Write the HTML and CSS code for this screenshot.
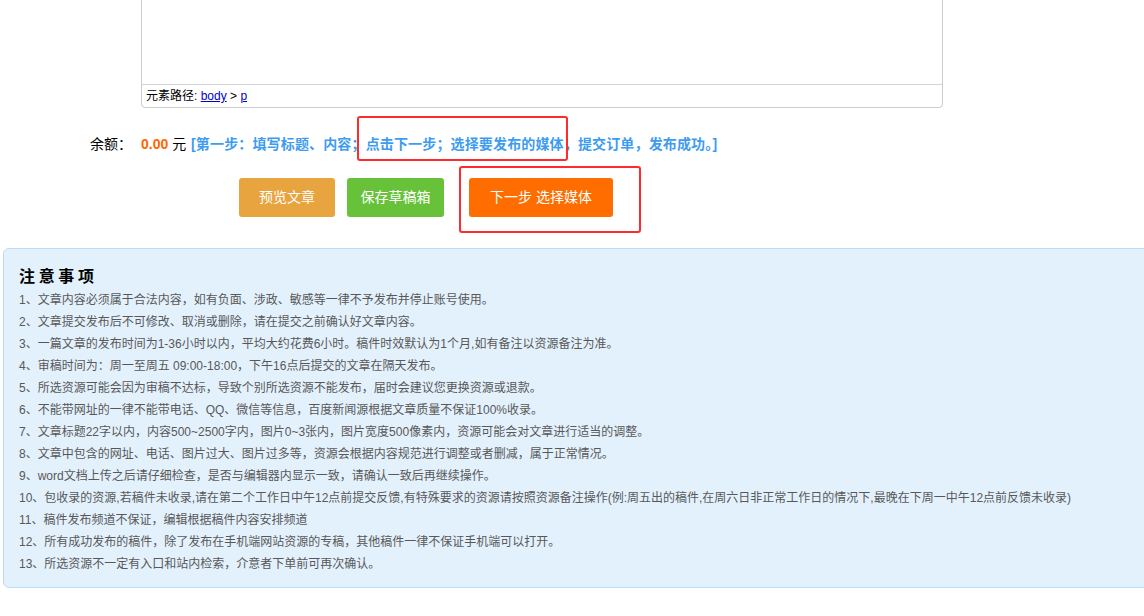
FILE: index.html
```html
<!DOCTYPE html>
<html>
<head>
	<meta charset="UTF-8">
	<title>发布文章</title>
	<link rel="stylesheet" href="styles.css">
</head>
<body>
	<div class="page">
		<!-- 编辑器 -->
		<div class="editor">
			<div class="editor_body"></div>
			<div class="editor_path">元素路径: <a href="#">body</a> &gt; <a href="#">p</a></div>
		</div>

		<div class="balance">
			<span class="balance_label">余额：</span><span class="money">0.00</span> 元
			<span class="steps">[第一步：填写标题、内容；点击下一步；选择要发布的媒体，提交订单，发布成功。]</span>
		</div>

		<div class="btns">
			<a class="btn btn_preview" href="#">预览文章</a>
			<a class="btn btn_save" href="#">保存草稿箱</a>
			<a class="btn btn_next" href="#">下一步 选择媒体</a>
		</div>

		<!-- 注意事项 -->
		<div class="notice">
			<h3>注 意 事 项</h3>
			<ul>
				<li>1、文章内容必须属于合法内容，如有负面、涉政、敏感等一律不予发布并停止账号使用。</li>
				<li>2、文章提交发布后不可修改、取消或删除，请在提交之前确认好文章内容。</li>
				<li>3、一篇文章的发布时间为1-36小时以内，平均大约花费6小时。稿件时效默认为1个月,如有备注以资源备注为准。</li>
				<li>4、审稿时间为：周一至周五 09:00-18:00，下午16点后提交的文章在隔天发布。</li>
				<li>5、所选资源可能会因为审稿不达标，导致个别所选资源不能发布，届时会建议您更换资源或退款。</li>
				<li>6、不能带网址的一律不能带电话、QQ、微信等信息，百度新闻源根据文章质量不保证100%收录。</li>
				<li>7、文章标题22字以内，内容500~2500字内，图片0~3张内，图片宽度500像素内，资源可能会对文章进行适当的调整。</li>
				<li>8、文章中包含的网址、电话、图片过大、图片过多等，资源会根据内容规范进行调整或者删减，属于正常情况。</li>
				<li>9、word文档上传之后请仔细检查，是否与编辑器内显示一致，请确认一致后再继续操作。</li>
				<li>10、包收录的资源,若稿件未收录,请在第二个工作日中午12点前提交反馈,有特殊要求的资源请按照资源备注操作(例:周五出的稿件,在周六日非正常工作日的情况下,最晚在下周一中午12点前反馈未收录)</li>
				<li>11、稿件发布频道不保证，编辑根据稿件内容安排频道</li>
				<li>12、所有成功发布的稿件，除了发布在手机端网站资源的专稿，其他稿件一律不保证手机端可以打开。</li>
				<li>13、所选资源不一定有入口和站内检索，介意者下单前可再次确认。</li>
			</ul>
		</div>

		<!-- 标注框 -->
		<div class="mark mark_step"></div>
		<div class="mark mark_btn"></div>
	</div>
</body>
</html>
```

FILE: styles.css
```css
* {
	padding: 0;
	margin: 0;
	box-sizing: border-box;
}

html,
body {
	overflow: hidden;
	background: #fff;
}

body {
	font-family: "Microsoft YaHei", "Liberation Sans", "Noto Sans CJK SC", sans-serif;
	font-size: 12px;
	color: #000;
}

li {
	list-style: none;
}

a {
	text-decoration: none;
}

.page {
	position: relative;
	width: 1160px;
}

/* 编辑器 */
.editor {
	width: 802px;
	margin: -1px 0 0 141px;
	border: 1px solid #ccc;
	border-radius: 0 0 4px 4px;
	background: #fff;
}

.editor_body {
	height: 85px;
	border-bottom: 1px solid #d4d4d4;
}

.editor_path {
	height: 22px;
	line-height: 22px;
	padding-left: 4px;
	font-size: 12px;
}

.editor_path a {
	color: #00c;
	text-decoration: underline;
}

/* 余额 */
.balance {
	margin-top: 25px;
	padding-left: 90px;
	height: 22px;
	line-height: 22px;
	font-size: 14px;
	white-space: nowrap;
}

.balance_label {
	display: inline-block;
	width: 51px;
}

.money {
	color: #ff6600;
	font-weight: bold;
}

.steps {
	color: #3d9cf1;
	font-weight: bold;
	margin-left: 1px;
	letter-spacing: 0.15px;
}

/* 按钮 */
.btns {
	display: flex;
	margin-top: 23px;
	padding-left: 239px;
	height: 39px;
}

.btn {
	display: block;
	height: 39px;
	line-height: 39px;
	text-align: center;
	color: #fff;
	font-size: 14px;
	border-radius: 3px;
}

.btn_preview {
	width: 96px;
	background: #e8a43e;
	margin-right: 12px;
}

.btn_save {
	width: 97px;
	background: #67c23a;
	margin-right: 25px;
}

.btn_next {
	width: 144px;
	background: #ff6d00;
}

/* 注意事项 */
.notice {
	margin: 31px 0 0 3px;
	width: 1157px;
	padding: 14px 0 12px 15px;
	background: #e3f1fd;
	border: 1px solid #bcdcf6;
	border-radius: 6px 0 0 6px;
}

.notice h3 {
	font-size: 16px;
	line-height: 24px;
	margin-bottom: 1px;
	font-weight: bold;
	color: #000;
	font-family: "SimHei", "Noto Sans CJK SC", sans-serif;
}

.notice ul {
	padding-top: 1px;
}

.notice li {
	font-size: 12px;
	line-height: 22px;
	color: #585858;
	white-space: nowrap;
}

/* 红色标注框 */
.mark {
	position: absolute;
	border: 2px solid #ff2b2b;
	border-radius: 3px;
}

.mark_step {
	left: 357px;
	top: 117px;
	width: 211px;
	height: 45px;
}

.mark_btn {
	left: 459px;
	top: 167px;
	width: 182px;
	height: 67px;
}
```
